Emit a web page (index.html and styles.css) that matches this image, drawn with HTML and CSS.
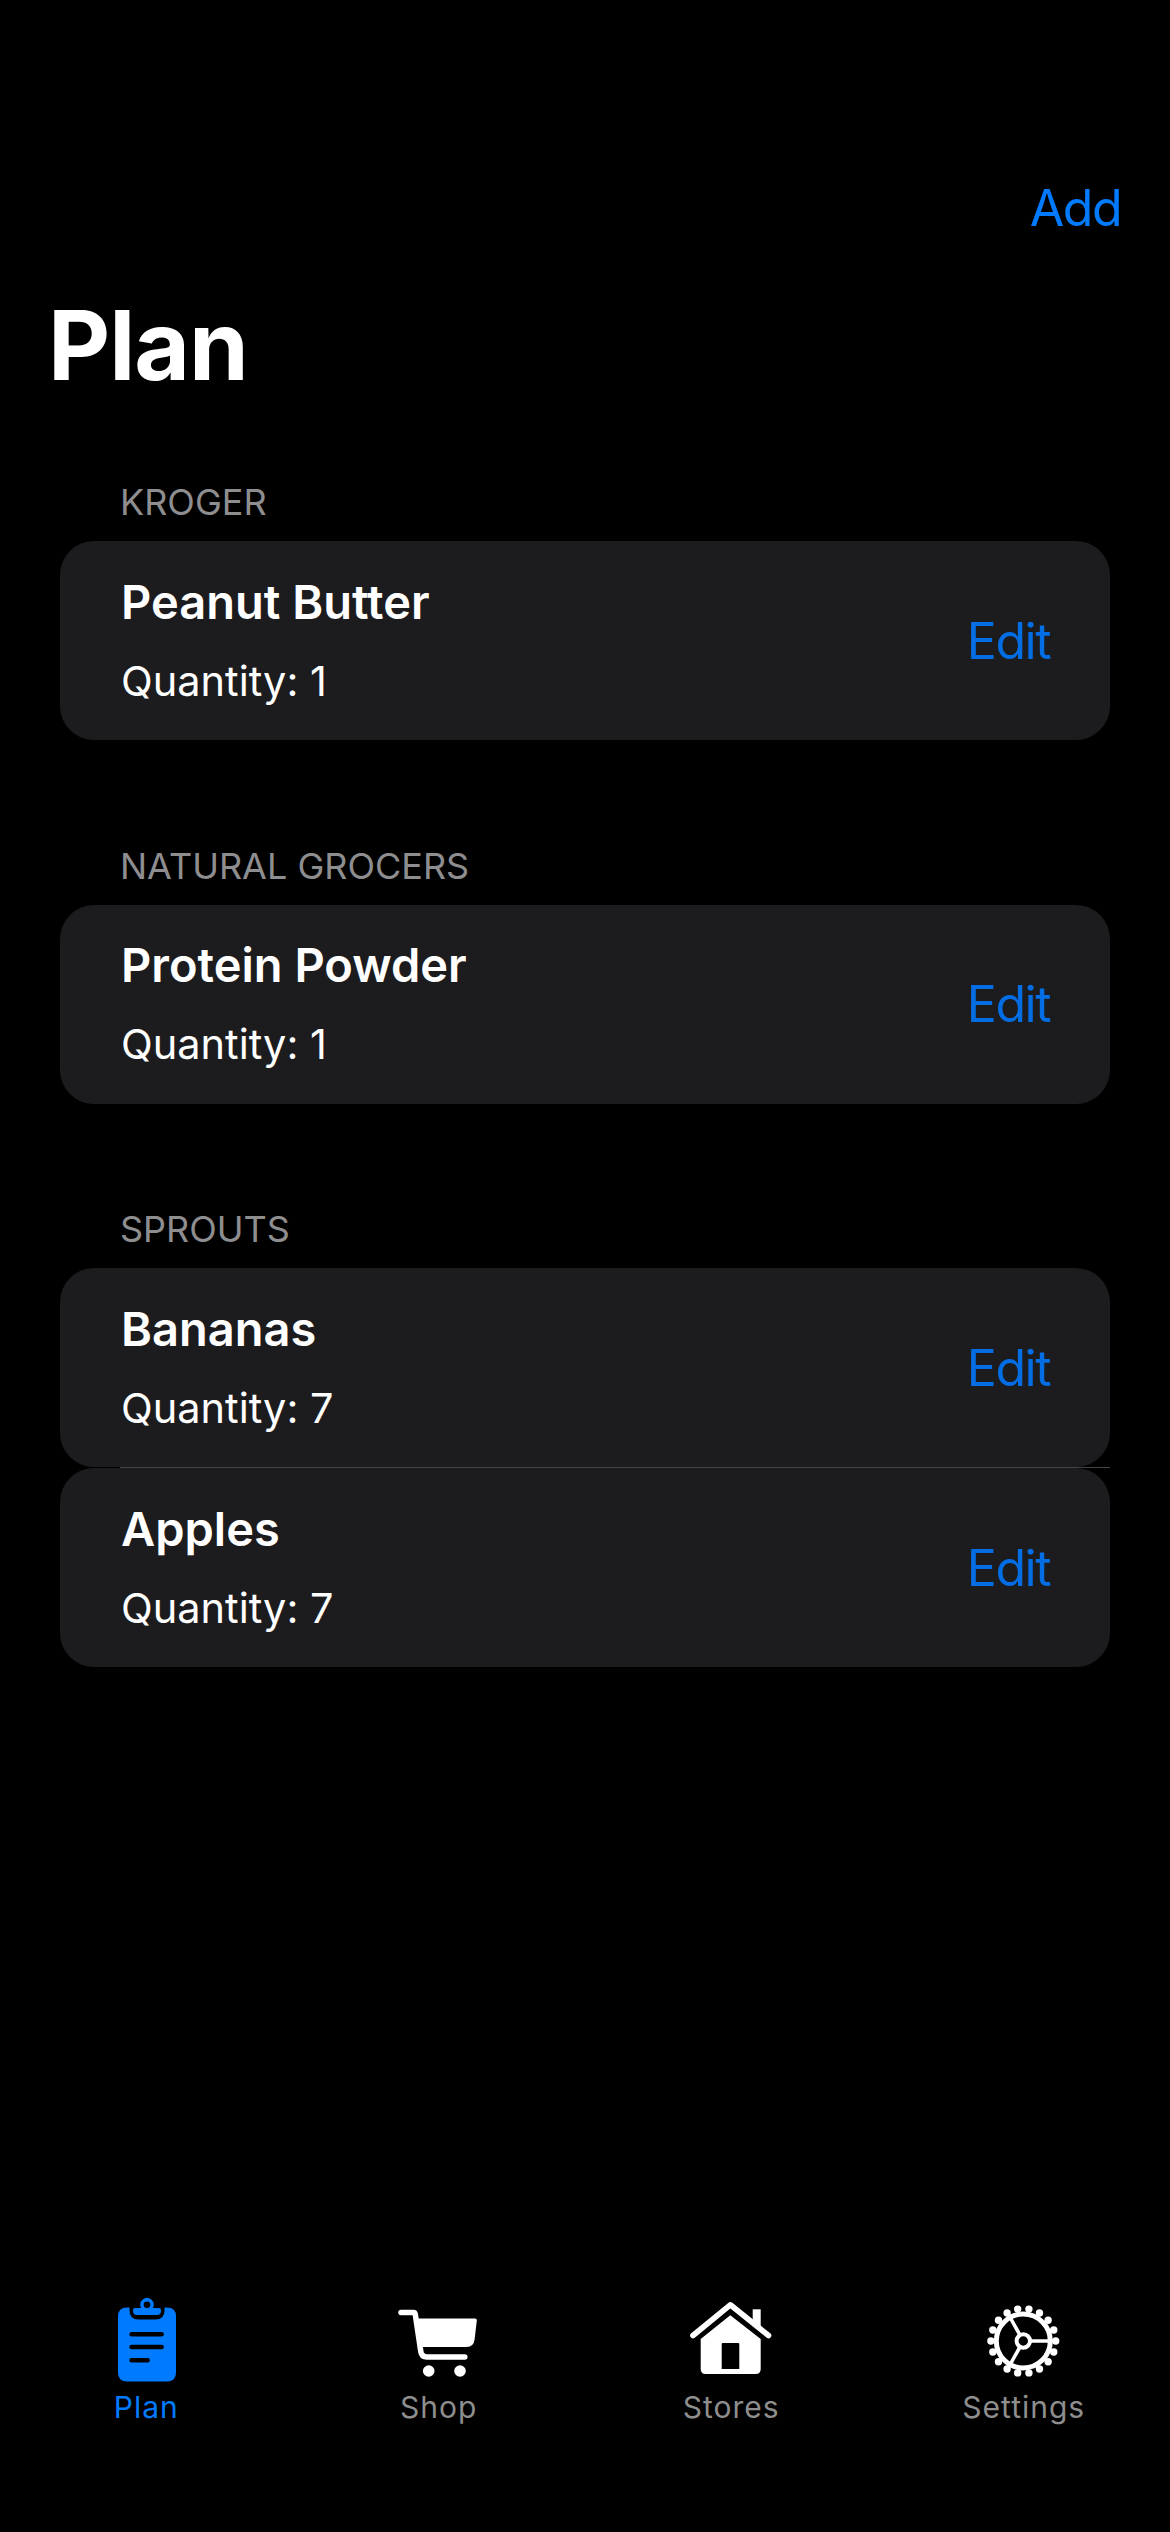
FILE: index.html
```html
<!DOCTYPE html>
<html lang="en">
<head>
  <meta charset="UTF-8">
  <meta name="viewport" content="width=device-width, initial-scale=1.0">
  <title>Plan</title>
  <link rel="stylesheet" href="styles.css">
</head>
<body>
  <header class="nav">
    <a class="link add">Add</a>
  </header>
  <h1 class="title">Plan</h1>

  <main class="lists">
    <section class="group">
      <h2 class="group-name">KROGER</h2>
      <div class="row">
        <div class="row-text">
          <div class="item">Peanut Butter</div>
          <div class="qty">Quantity: 1</div>
        </div>
        <a class="link edit">Edit</a>
      </div>
    </section>

    <section class="group">
      <h2 class="group-name">NATURAL GROCERS</h2>
      <div class="row">
        <div class="row-text">
          <div class="item">Protein Powder</div>
          <div class="qty">Quantity: 1</div>
        </div>
        <a class="link edit">Edit</a>
      </div>
    </section>

    <section class="group">
      <h2 class="group-name">SPROUTS</h2>
      <div class="row">
        <div class="row-text">
          <div class="item">Bananas</div>
          <div class="qty">Quantity: 7</div>
        </div>
        <a class="link edit">Edit</a>
      </div>
      <div class="divider"></div>
      <div class="row">
        <div class="row-text">
          <div class="item">Apples</div>
          <div class="qty">Quantity: 7</div>
        </div>
        <a class="link edit">Edit</a>
      </div>
    </section>
  </main>

  <nav class="tabs">
    <div class="tab active">
      <svg class="tab-icon" viewBox="-19 0 130 100">
        <path fill="#007aff" d="M29.500 25.500h-2.500q-9 0-9 9v56q0 9 9 9h40q9 0 9-9v-56q0-9-9-9h-2.500v3q0 9-9 9H38.500q-9 0-9-9z"/>
        <path fill="#007aff" fill-rule="evenodd" d="M35 26h6.200a6.700 6.700 0 1 1 11.600 0H59q2 0 2 2v1q0 4-4 4H37q-4 0-4-4v-1q0-2 2-2zM47 19.400a3.300 3.300 0 1 0 0 6.600a3.300 3.300 0 1 0 0-6.600z"/>
        <path stroke="#000" stroke-width="4.600" stroke-linecap="round" fill="none" d="M31.600 52.300h30M31.600 65h30M31.600 78.300h16"/>
      </svg>
      <span class="tab-label">Plan</span>
    </div>
    <div class="tab">
      <svg class="tab-icon" viewBox="-6 0 130 100">
        <path fill="none" stroke="#fff" stroke-width="5.500" stroke-linecap="round" stroke-linejoin="round" d="M21 30.500h12.500q1.500 0 1.800 2l5.500 37q.8 5.500 6 5.500h38"/>
        <path fill="#fff" d="M37.500 36.500h57.500q2 0 1.800 2l-2.200 19q-1 7.500-8 7.500H42.500q-1.500 0-1.800-2z"/>
        <circle cx="48.700" cy="89" r="5.800" fill="#fff"/>
        <circle cx="80" cy="89" r="5.800" fill="#fff"/>
      </svg>
      <span class="tab-label">Shop</span>
    </div>
    <div class="tab">
      <svg class="tab-icon" viewBox="-4 0 130 100">
        <path fill="#fff" d="M82.700 27.300h8v17h-8z"/>
        <path fill="none" stroke="#fff" stroke-width="5.600" stroke-linecap="round" stroke-linejoin="round" d="M23 53.500L60.300 22.800L98.500 53.500"/>
        <path fill="#fff" fill-rule="evenodd" d="M60.300 33.300L90.700 57v30q0 5-5 5H35.700q-5 0-5-5V57zM52.700 61q-1 0-1 1v25h17.600V62q0-1-1-1z"/>
      </svg>
      <span class="tab-label">Stores</span>
    </div>
    <div class="tab">
      <svg class="tab-icon" viewBox="-1 0 130 100">
        <circle cx="63.300" cy="59" r="27" fill="none" stroke="#fff" stroke-width="5"/>
        <circle cx="63.300" cy="59" r="32.400" fill="none" stroke="#fff" stroke-width="7.400" stroke-linecap="round" stroke-dasharray="0 1" pathLength="18"/>
        <circle cx="63.300" cy="59" r="6.700" fill="none" stroke="#fff" stroke-width="4"/>
        <path stroke="#fff" stroke-width="3.600" fill="none" d="M70 59h21M60 53.200L48.500 32.500M60 64.800L48.500 85.500"/>
      </svg>
      <span class="tab-label">Settings</span>
    </div>
  </nav>
</body>
</html>
```

FILE: styles.css
```css
* { box-sizing: border-box; }
html, body { margin: 0; height: 100%; }
body { display: flex; flex-direction: column; min-height: 2532px; background: #000; color: #fff; font-family: Inter, "Liberation Sans", sans-serif; }

.link { color: #007aff; font-size: 50px; font-weight: 400; letter-spacing: -1.5px; }

.nav { display: flex; justify-content: flex-end; padding: 178px 49px 0; height: 285px; }
.add { line-height: 60px; }

.title { margin: 0; padding-left: 48px; font-size: 96px; line-height: 120px; font-weight: 700; letter-spacing: -1px; }

.lists { display: flex; flex-direction: column; gap: 104.500px; padding: 0 60px; margin-top: 76px; }
.group-name { margin: 0 0 20px 60px; padding-top: 2px; height: 40px; line-height: 38px; font-size: 36px; font-weight: 400; color: #8e8e90; }

.row { display: flex; align-items: center; justify-content: space-between; height: 199px; padding: 0 60px 0 61px; background: #1c1c1e; border-radius: 34px; }
.row-text { padding-bottom: 4px; }
.item { font-size: 47px; line-height: 60px; font-weight: 600; }
.qty { margin-top: 24px; font-size: 41.500px; line-height: 50px; font-weight: 400; }
.edit { line-height: 60px; opacity: .88; }

.divider { height: 1px; margin-left: 60px; background: #434345; }

.tabs { display: grid; grid-template-columns: repeat(4, 1fr); margin-top: auto; padding-bottom: 107px; }
.tab { display: flex; flex-direction: column; align-items: center; color: #8e8e8e; }
.tab-icon { width: 130px; height: 100px; display: block; margin-bottom: -1px; }
.tab-label { margin-top: 8px; font-size: 30px; line-height: 36px; font-weight: 400; letter-spacing: 1px; }
.tab.active { color: #007aff; }
```
